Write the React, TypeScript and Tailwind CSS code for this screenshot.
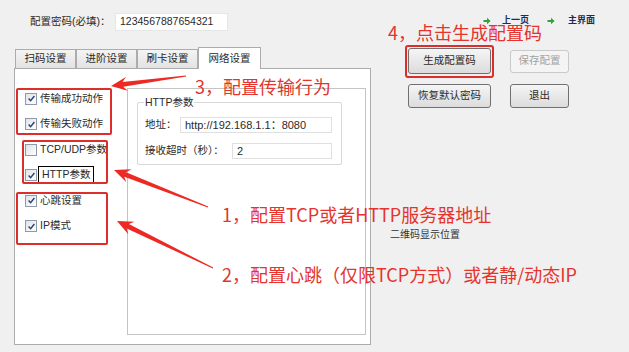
import React from 'react';

function Check({ checked }: { checked: boolean }) {
    return (
        <span className="w-[12px] h-[12px] border border-[#8f9aa8] bg-linear-to-br from-[#dfe3e8] to-white flex items-center justify-center shrink-0">
            {checked && (
                <svg width="9" height="9" viewBox="0 0 9 9">
                    <path d="M1.6 4.5 L3.6 6.7 L7.4 2" fill="none" stroke="#2a3f6f" strokeWidth="1.4" />
                </svg>
            )}
        </span>
    );
}

function NavArrow() {
    return (
        <svg width="8" height="8" viewBox="0 0 8 8" className="shrink-0">
            <path d="M0.5 3 H4 V0.8 L7.6 4 L4 7.2 V5 H0.5 Z" fill="#2fa23a" />
        </svg>
    );
}

// tail (tx,ty) -> tip (hx,hy)
function arrowPoints(tx: number, ty: number, hx: number, hy: number) {
    const dx = tx - hx;
    const dy = ty - hy;
    const len = Math.hypot(dx, dy);
    const ux = dx / len;
    const uy = dy / len;
    const nx = -uy;
    const ny = ux;
    const p = (a: number, s: number) => `${hx + ux * a + nx * s},${hy + uy * a + ny * s}`;
    return [p(0, 0), p(16, 7), p(12, 2.4), p(len, 0.5), p(len, -0.5), p(12, -2.4), p(16, -7)].join(' ');
}

const options = [
    { label: '传输成功动作', checked: true },
    { label: '传输失败动作', checked: true },
    { label: 'TCP/UDP参数', checked: false },
    { label: 'HTTP参数', checked: true, focus: true },
    { label: '心跳设置', checked: true },
    { label: 'IP模式', checked: true }
];

const tabs = ['扫码设置', '进阶设置', '刷卡设置'];

export default function App() {
    return (
        <div className="w-[629px] h-[352px] bg-[#f0f0f0] relative overflow-hidden flex font-['Liberation_Sans','Noto_Sans_CJK_SC',sans-serif] text-[10.5px] text-[#2a2a2a]">
            {/* left side: password + tab control */}
            <div className="w-[372px] pl-[14px] flex flex-col shrink-0">
                <div className="flex items-center pt-[13px] pl-[16px]">
                    <span className="w-[85px]">配置密码(必填)：</span>
                    <div className="w-[113px] h-[18px] bg-white border border-[#e6e6e6] flex items-center pl-[4px]">
                        1234567887654321
                    </div>
                </div>

                <div className="flex items-end mt-[16px] pl-[1px] h-[21px] relative z-10">
                    {tabs.map((t) => (
                        <div key={t} className="w-[61px] h-[19px] border border-[#acacac] border-b-0 bg-linear-to-b from-[#f4f4f4] to-[#e3e3e3] flex items-center justify-center">
                            {t}
                        </div>
                    ))}
                    <div className="w-[63px] h-[22px] border border-[#acacac] border-b-0 bg-white flex items-center justify-center -mb-px">
                        网络设置
                    </div>
                </div>

                <div className="w-[357px] h-[277px] border border-[#acacac] bg-white flex">
                    <div className="w-[112px] pt-[17px] pl-[10px] flex flex-col shrink-0">
                        {options.map((o) => (
                            <div key={o.label} className="h-[25.5px] flex items-center gap-[3px]">
                                <Check checked={o.checked} />
                                <span className={o.focus ? 'border border-black px-[3px] h-[18px] flex items-center -ml-[2px]' : ''}>
                                    {o.label}
                                </span>
                            </div>
                        ))}
                    </div>

                    <div className="w-[239px] h-[247px] mt-[19px] border border-[#c4c4c4] bg-white">
                        <div className="ml-[9px] mt-[13px] w-[205px] h-[63px] border border-[#d8d8d8] rounded-[2px] relative pl-[7px] pt-[14px] flex flex-col gap-[10px]">
                            <span className="absolute -top-[8px] left-[6px] bg-white px-[1px]">HTTP参数</span>
                            <div className="flex items-center">
                                <span className="w-[35px]">地址：</span>
                                <div className="w-[152px] h-[16px] border border-[#e0e0e0] flex items-center pl-[4px] text-[11px]">
                                    http://192.168.1.1：8080
                                </div>
                            </div>
                            <div className="flex items-center">
                                <span className="w-[87px]">接收超时（秒）：</span>
                                <div className="w-[100px] h-[16px] border border-[#e0e0e0] flex items-center pl-[4px] text-[11px]">
                                    2
                                </div>
                            </div>
                        </div>
                    </div>
                </div>
            </div>

            {/* right side: nav + buttons */}
            <div className="flex flex-col pl-[18px]">
                <div className="flex items-center h-[13px] mt-[14px] pl-[93px] text-[9px] font-bold text-[#1d2b5b]">
                    <NavArrow />
                    <span className="ml-[11px]">上一页</span>
                    <span className="ml-[18px]"><NavArrow /></span>
                    <span className="ml-[13px]">主界面</span>
                </div>
                <div className="flex items-center ml-[18px] mt-[21px]">
                    <button className="w-[83px] h-[26px] rounded-[3px] border border-[#707070] bg-linear-to-b from-[#f5f5f5] to-[#dcdcdc]">
                        生成配置码
                    </button>
                    <button className="w-[59px] h-[23px] ml-[19px] rounded-[3px] border border-[#c9c9c9] bg-[#f4f4f4] text-[#a3a3a3]">
                        保存配置
                    </button>
                </div>
                <div className="flex items-center ml-[18px] mt-[10px]">
                    <button className="w-[83px] h-[24px] rounded-[3px] border border-[#707070] bg-linear-to-b from-[#f5f5f5] to-[#dcdcdc]">
                        恢复默认密码
                    </button>
                    <button className="w-[59px] h-[24px] ml-[19px] rounded-[3px] border border-[#707070] bg-linear-to-b from-[#f5f5f5] to-[#dcdcdc]">
                        退出
                    </button>
                </div>
                <span className="mt-[119px] text-[10px] text-[#333]">二维码显示位置</span>
            </div>

            {/* red annotations drawn over the screenshot */}
            <div className="absolute inset-0 pointer-events-none">
                <div className="absolute left-[16px] top-[88px] w-[96px] h-[47px] border-2 border-[#dc2f2b] rounded-[2px]"></div>
                <div className="absolute left-[22px] top-[140px] w-[86px] h-[44px] border-2 border-[#dc2f2b] rounded-[2px]"></div>
                <div className="absolute left-[16px] top-[192px] w-[92px] h-[53px] border-2 border-[#dc2f2b] rounded-[2px]"></div>
                <div className="absolute left-[405px] top-[45px] w-[89px] h-[33px] border-2 border-[#dc2f2b] rounded-[3px]"></div>

                <svg className="absolute inset-0" width="629" height="352">
                    <polygon points={arrowPoints(186, 76, 111, 86)} fill="#ec2a23" />
                    <polygon points={arrowPoints(208, 207, 114, 170)} fill="#ec2a23" />
                    <polygon points={arrowPoints(213, 268, 117, 221)} fill="#ec2a23" />
                </svg>

                <span className="absolute left-[195px] top-[77px] leading-none text-[18px] text-[#e5332e] font-['Noto_Sans_CJK_SC',sans-serif] whitespace-nowrap">
                    3，配置传输行为
                </span>
                <span className="absolute left-[388px] top-[23px] leading-none text-[18px] text-[#e5332e] font-['Noto_Sans_CJK_SC',sans-serif] whitespace-nowrap">
                    4，点击生成配置码
                </span>
                <span className="absolute left-[222px] top-[205px] leading-none text-[18px] text-[#e5332e] font-['Noto_Sans_CJK_SC',sans-serif] whitespace-nowrap">
                    1，配置TCP或者HTTP服务器地址
                </span>
                <span className="absolute left-[222px] top-[265px] leading-none text-[18px] text-[#e5332e] font-['Noto_Sans_CJK_SC',sans-serif] whitespace-nowrap">
                    2，配置心跳（仅限TCP方式）或者静/动态IP
                </span>
            </div>
        </div>
    );
}
